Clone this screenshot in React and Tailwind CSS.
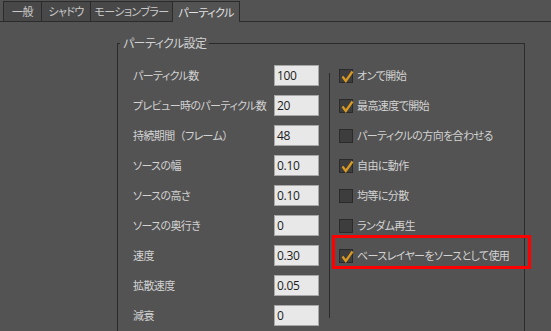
import React from "react";

const leftRows = [
  ["パーティクル数", "100"],
  ["プレビュー時のパーティクル数", "20"],
  ["持続期間（フレーム）", "48"],
  ["ソースの幅", "0.10"],
  ["ソースの高さ", "0.10"],
  ["ソースの奥行き", "0"],
  ["速度", "0.30"],
  ["拡散速度", "0.05"],
  ["減衰", "0"],
];

const rightRows = [
  ["オンで開始", true],
  ["最高速度で開始", true],
  ["パーティクルの方向を合わせる", false],
  ["自由に動作", true],
  ["均等に分散", false],
  ["ランダム再生", false],
  ["ベースレイヤーをソースとして使用", true],
];

function Check({ on }) {
  return (
    <div className="relative w-[14px] h-[14px] shrink-0 bg-[#3d3d3d] border border-[#2a2a2a]">
      {on && (
        <svg className="absolute left-[1px] top-[0px]" width="13" height="13" viewBox="0 0 13 13">
          <path d="M1.5 6.5 L4.8 11 L11.5 1.5" fill="none" stroke="#d99a22" strokeWidth="2.2" strokeLinejoin="miter" />
        </svg>
      )}
    </div>
  );
}

function Label({ text }) {
  if (text === "持続期間（フレーム）") {
    return (
      <>
        持続期間<span className="[font-feature-settings:normal]">（</span>フレーム<span className="[font-feature-settings:normal]">）</span>
      </>
    );
  }
  return text;
}

export default function App() {
  return (
    <div className="w-[551px] h-[331px] overflow-hidden bg-[#535353] font-['Noto_Sans_CJK_JP',sans-serif] text-[11px] tracking-[-0.6px] text-[#d2d2d2] [font-feature-settings:'palt']">
      <div className="flex items-end h-[22px] pl-[3px] border-b border-[#2b2b2b] whitespace-nowrap">
        <div className="w-[38px] h-[20px] flex items-center justify-center border-l border-t border-[#2b2b2b] bg-[#484848] text-[#c8c8c8]">一般</div>
        <div className="w-[49px] h-[20px] flex items-center justify-center border-l border-t border-[#2b2b2b] bg-[#484848] text-[#c8c8c8]">シャドウ</div>
        <div className="w-[82px] h-[20px] flex items-center justify-center border-l border-t border-[#2b2b2b] bg-[#484848] text-[#c8c8c8]">モーションブラー</div>
        <div className="w-[68px] h-[21px] -mb-px flex items-center justify-center border-l border-t border-r border-[#2b2b2b] bg-[#535353] text-[#e2e2e2]">パーティクル</div>
      </div>
      <fieldset className="ml-[117px] mt-[13px] w-[408px] border border-[#2b2b2b] pb-[30px]">
        <legend className="ml-[2px] px-[3px] h-[16px] leading-[16px] text-[12px]">パーティクル設定</legend>
        <div className="flex pt-[14px]">
          <div className="flex flex-col gap-[9px] pl-[15px]">
            {leftRows.map(([label, val]) => (
              <div key={label} className="flex items-center h-[21px]">
                <div className="w-[141px] whitespace-nowrap"><Label text={label} /></div>
                <div className="w-[45px] h-[21px] bg-[#e8e8e8] border border-[#a8a8a8] pl-[2px] flex items-center text-[#1c1c1c] font-['Open_Sans',sans-serif] text-[12px] tracking-[-0.3px]">{val}</div>
              </div>
            ))}
          </div>
          <div className="ml-[10px] mt-[8px] w-px h-[245px] bg-[#2b2b2b]" />
          <div className="flex flex-col gap-[9px] pl-[9px]">
            {rightRows.map(([label, on], i) => (
              <div key={label} className="relative flex items-center h-[21px] gap-[4px]">
                <Check on={on} />
                <div className="whitespace-nowrap">{label}</div>
                {i === 6 && (
                  <div className="absolute left-[-7px] top-[-10px] w-[199px] h-[34px] border-[3px] border-[#ff0000]" />
                )}
              </div>
            ))}
          </div>
        </div>
      </fieldset>
    </div>
  );
}
